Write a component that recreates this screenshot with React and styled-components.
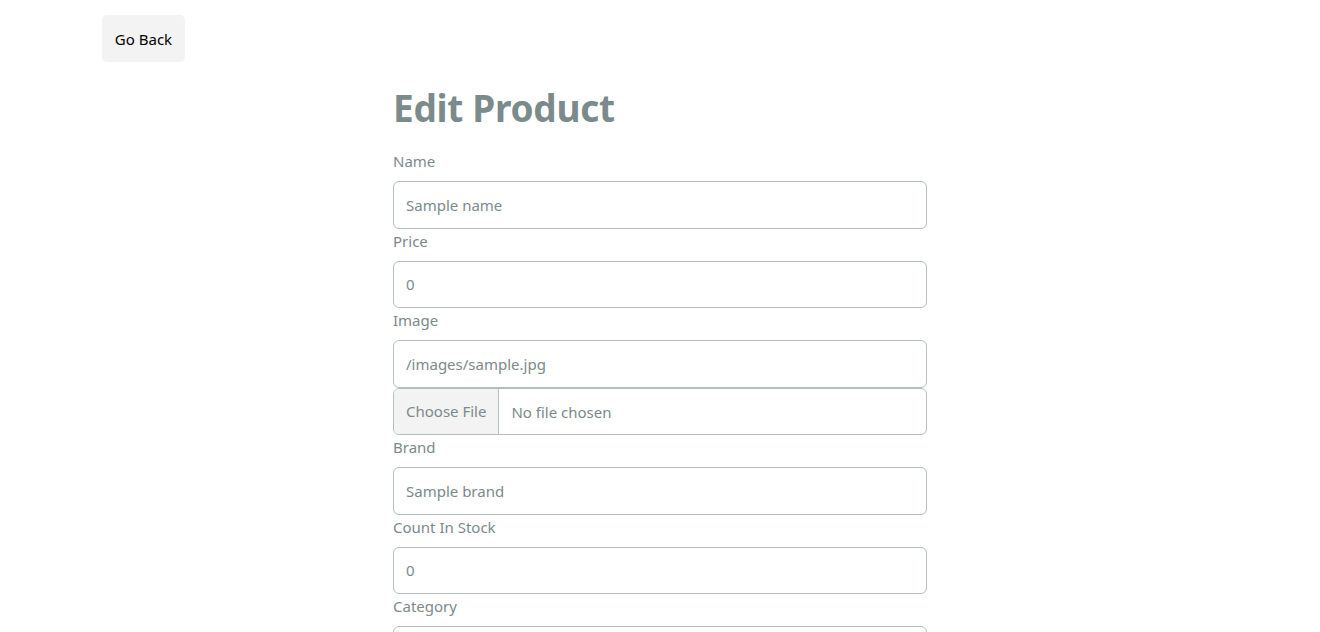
import React from 'react'
import styled, { createGlobalStyle } from 'styled-components'

const GlobalStyle = createGlobalStyle`
  body {
    margin: 0;
    font-family: 'Noto Sans', 'Open Sans', sans-serif;
    font-size: 16px;
    line-height: 1.5;
    color: #7b8a8b;
    background: #fff;
  }
  * {
    box-sizing: border-box;
  }
`

const fields = [
  { label: 'Name', value: 'Sample name' },
  { label: 'Price', value: '0' },
  { label: 'Image', value: '/images/sample.jpg', file: true },
  { label: 'Brand', value: 'Sample brand' },
  { label: 'Count In Stock', value: '0' },
  { label: 'Category', value: 'Sample category' },
  { label: 'Description', value: 'Sample description' }
]

const App = () => {
  return (
    <>
      <GlobalStyle />
      <Container>
        <BackButton>Go Back</BackButton>

        <FormColumn>
          <Title>Edit Product</Title>
          <form onSubmit={e => e.preventDefault()}>
            {fields.map(field => (
              <Group key={field.label}>
                <Label>{field.label}</Label>
                <Input type="text" defaultValue={field.value} />
                {field.file && <FileInput type="file" />}
              </Group>
            ))}
            <SubmitButton type="submit">Update</SubmitButton>
          </form>
        </FormColumn>
      </Container>
    </>
  )
}

export default App

const Container = styled.div`
  max-width: 1116px;
  margin: 0 auto;
  padding-top: 15px;
`

const BackButton = styled.button`
  display: block;
  width: 83px;
  height: 47px;
  padding: 0;
  border: none;
  border-radius: 5px;
  background: #f3f3f3;
  color: #000;
  font-family: inherit;
  font-size: 15px;
  cursor: pointer;
`

const FormColumn = styled.div`
  width: 534px;
  margin: 22px 0 0 291px;
`

const Title = styled.h1`
  margin: 0 0 17px;
  font-size: 37px;
  font-weight: 700;
  line-height: 48px;
  color: #7b8a8b;
  letter-spacing: -0.3px;
`

const Group = styled.div`
  display: flex;
  flex-direction: column;
`

const Label = styled.label`
  display: block;
  height: 24px;
  margin-bottom: 8px;
  font-size: 15px;
  line-height: 24px;
`

const Input = styled.input`
  width: 100%;
  height: 47.5px;
  padding: 0 12px;
  border: 1px solid #b4bfc0;
  border-radius: 6px;
  background: #fff;
  color: #7b8a8b;
  font-family: inherit;
  font-size: 15px;
  outline: none;
`

const FileInput = styled(Input)`
  padding: 0;
  overflow: hidden;
  line-height: 45px;

  &::file-selector-button {
    height: 100%;
    margin: 0 12px 0 0;
    padding: 0 12px;
    border: none;
    border-right: 1px solid #b4bfc0;
    border-radius: 0;
    background: #f3f3f3;
    color: #7b8a8b;
    font-family: inherit;
    font-size: 15px;
  }
`

const SubmitButton = styled.button`
  margin: 16px 0 40px;
  padding: 12px 20px;
  border: none;
  border-radius: 5px;
  background: #2c3e50;
  color: #fff;
  font-family: inherit;
  font-size: 15px;
`
